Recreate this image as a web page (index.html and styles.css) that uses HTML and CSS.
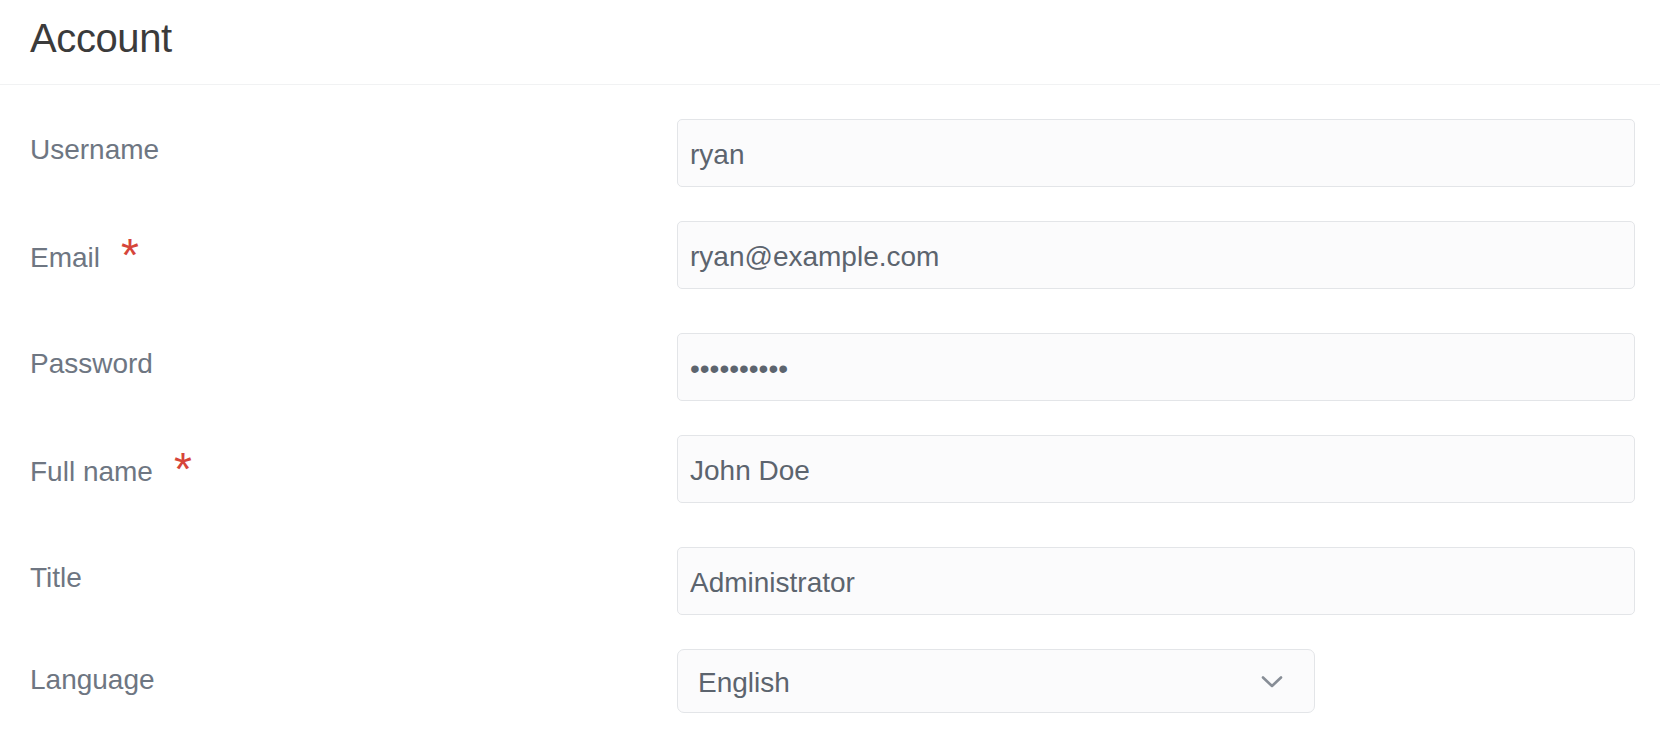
FILE: index.html
```html
<!DOCTYPE html>
<html lang="en">
<head>
<meta charset="utf-8">
<title>Account</title>
<link rel="stylesheet" href="styles.css">
</head>
<body>
<header class="header">
  <h1 class="title">Account</h1>
</header>
<form class="form">
  <div class="row">
    <label class="label">Username</label>
    <input class="field" type="text" value="ryan">
  </div>
  <div class="row row-req">
    <label class="label label-req">Email<span class="req">*</span></label>
    <input class="field" type="text" value="ryan@example.com">
  </div>
  <div class="row">
    <label class="label">Password</label>
    <input class="field" type="password" value="ryanpasswd">
  </div>
  <div class="row row-req">
    <label class="label label-req">Full name<span class="req">*</span></label>
    <input class="field" type="text" value="John Doe">
  </div>
  <div class="row">
    <label class="label">Title</label>
    <input class="field" type="text" value="Administrator">
  </div>
  <div class="row">
    <label class="label">Language</label>
    <div class="select">
      <span class="select-value">English</span>
      <svg class="chevron" width="22" height="12" viewBox="0 0 22 12" aria-hidden="true">
        <polyline points="2,1.5 11,10 20,1.5" fill="none" stroke="#878d96" stroke-width="2.6" stroke-linecap="round" stroke-linejoin="round"/>
      </svg>
    </div>
  </div>
</form>
</body>
</html>
```

FILE: styles.css
```css
html, body {
  margin: 0;
  padding: 0;
  background: #ffffff;
  font-family: "Liberation Sans", Arial, sans-serif;
}

.header {
  height: 84px;
  box-sizing: content-box;
  border-bottom: 1px solid #f1f2f3;
  padding: 0 30px;
}

.title {
  margin: 0;
  padding-top: 14px;
  font-size: 40px;
  line-height: 48px;
  font-weight: 400;
  color: #3b3b3b;
  letter-spacing: -0.4px;
}

.form {
  padding: 34px 25px 0 30px;
}

.row {
  display: grid;
  grid-template-columns: 647px 1fr;
  align-items: start;
  margin-bottom: 34px;
}

.row-req {
  min-height: 78px;
}

.label {
  display: block;
  padding-top: 11px;
  font-size: 28px;
  line-height: 40px;
  color: #6e7682;
}

.label-req {
  padding-top: 17px;
}

.req {
  display: inline-block;
  margin-left: 21px;
  font-size: 46px;
  line-height: 0;
  vertical-align: -4px;
  color: #d6453a;
}

.field {
  display: block;
  box-sizing: border-box;
  width: 100%;
  height: 68px;
  margin: 0;
  padding: 4px 12px 0;
  border: 1px solid #e3e5e8;
  border-radius: 5px;
  background: #fbfbfc;
  font-family: "Liberation Sans", Arial, sans-serif;
  font-size: 28px;
  color: #5c646e;
  outline: none;
}

.select {
  box-sizing: border-box;
  width: 638px;
  height: 64px;
  display: flex;
  align-items: center;
  justify-content: space-between;
  padding: 3px 31px 0 20px;
  border: 1px solid #e3e5e8;
  border-radius: 7px;
  background: #fbfbfc;
  font-size: 28px;
  color: #5c646e;
}

.chevron {
  display: block;
  margin-top: -1px;
}
```
